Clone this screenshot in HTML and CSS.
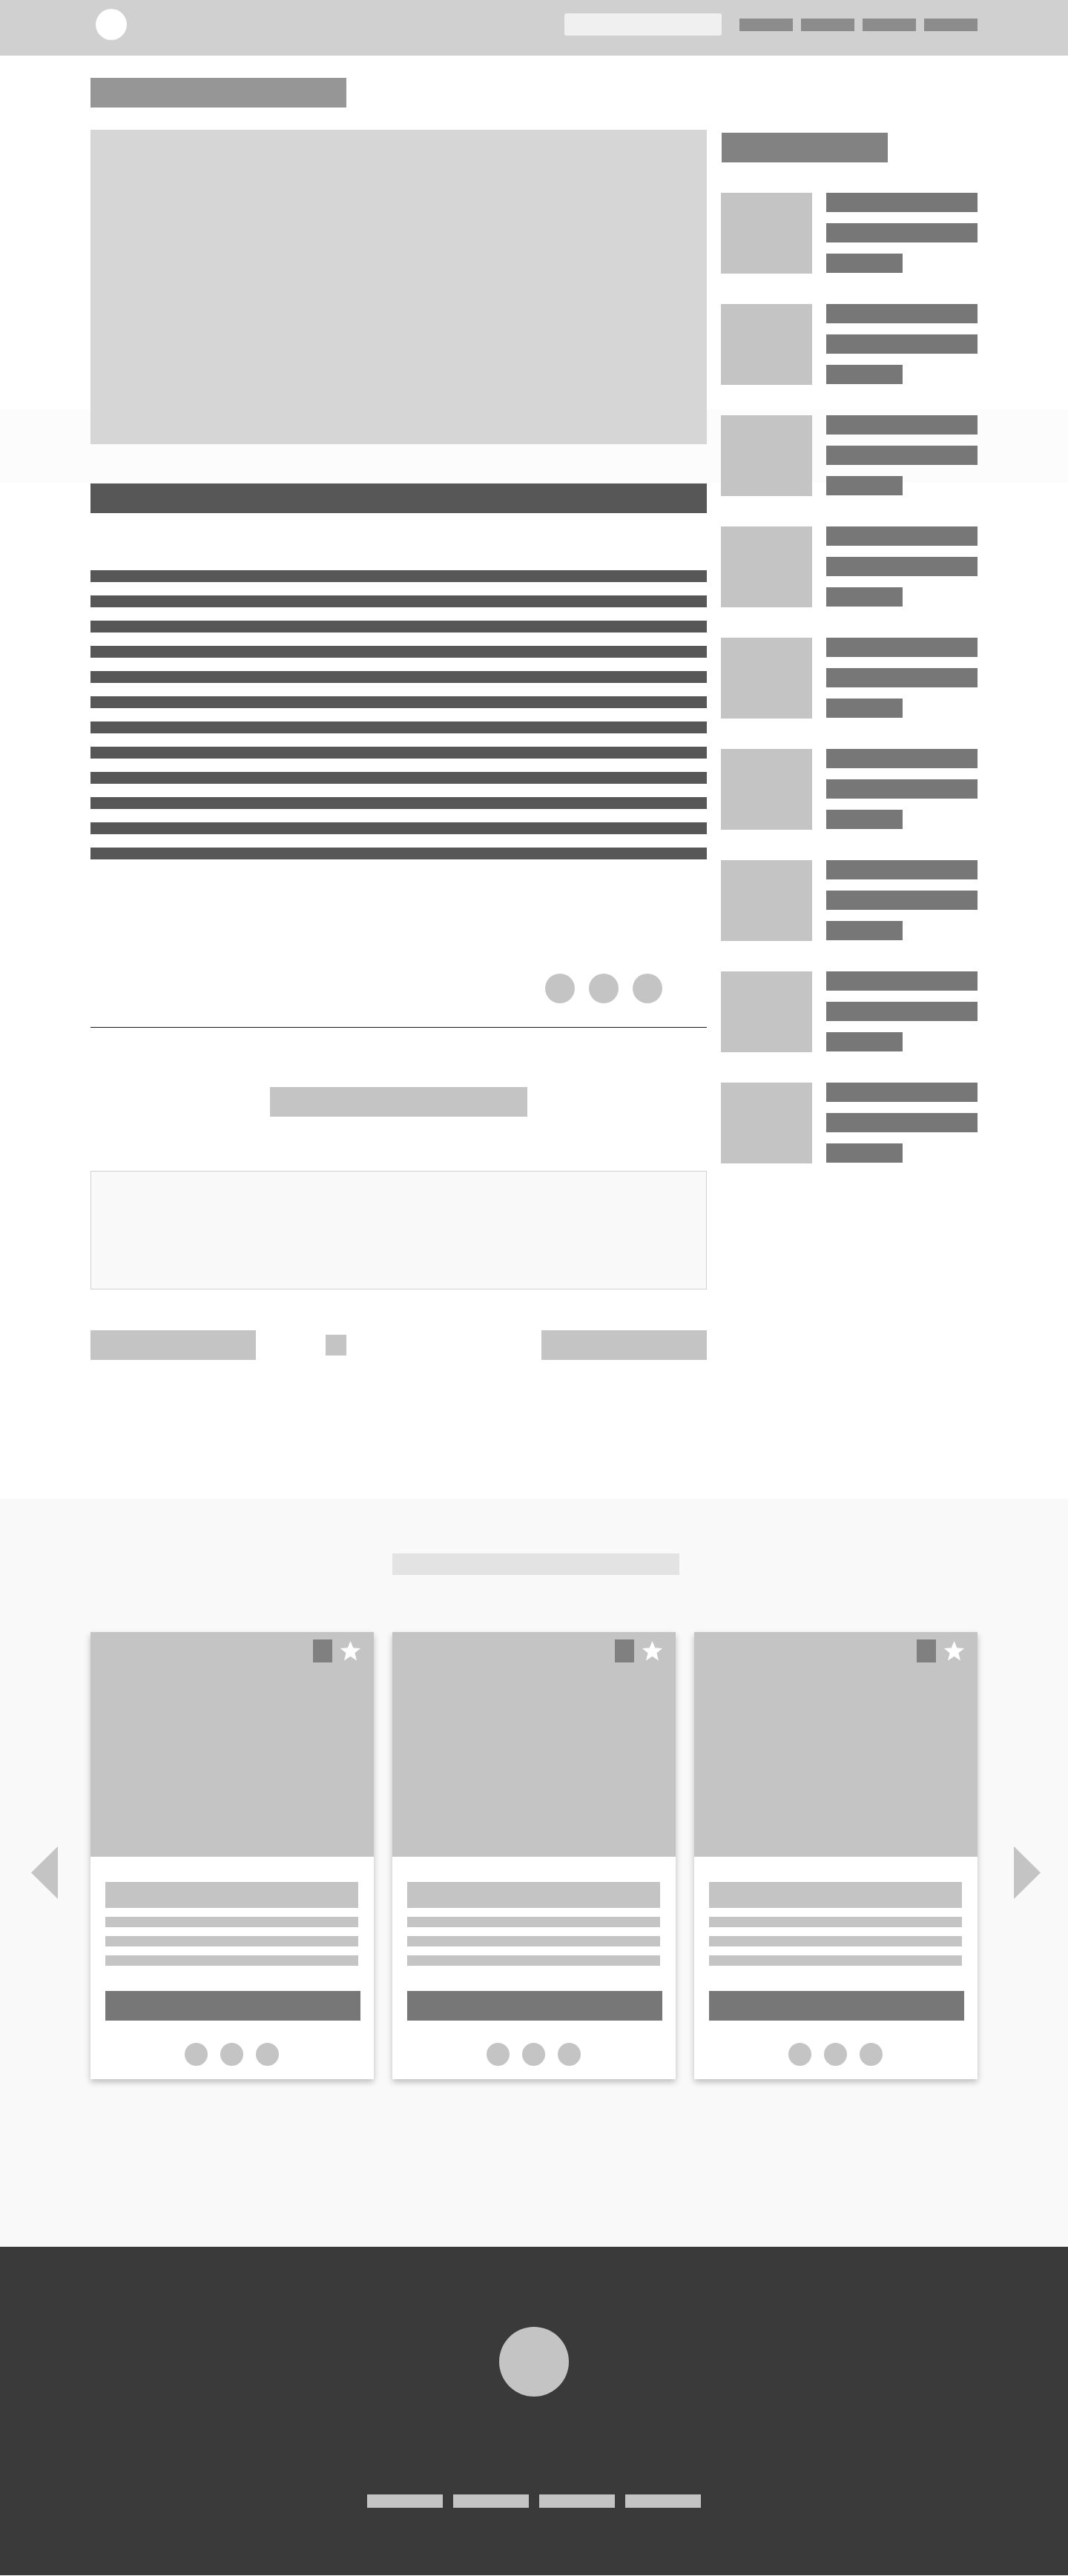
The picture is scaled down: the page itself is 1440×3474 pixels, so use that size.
FILE: index.html
```html
<!DOCTYPE html>
<html lang="en">
<head>
  <meta charset="UTF-8">
  <meta name="viewport" content="width=device-width, initial-scale=1.0">
  <title>Article Wireframe</title>
  <link rel="stylesheet" href="styles.css">
</head>
<body>
  <header class="site-header">
    <div class="container header-row">
      <div class="logo"></div>
      <div class="search"></div>
      <nav class="nav">
        <a class="nav-item" href="#"></a>
        <a class="nav-item" href="#"></a>
        <a class="nav-item" href="#"></a>
        <a class="nav-item" href="#"></a>
      </nav>
    </div>
  </header>

  <main class="page-main">
    <div class="container">
      <div class="page-title"></div>
      <div class="layout">
        <article class="article">
          <div class="hero"></div>
          <div class="heading"></div>
          <div class="text-lines">
            <div class="line"></div>
            <div class="line"></div>
            <div class="line"></div>
            <div class="line"></div>
            <div class="line"></div>
            <div class="line"></div>
            <div class="line"></div>
            <div class="line"></div>
            <div class="line"></div>
            <div class="line"></div>
            <div class="line"></div>
            <div class="line"></div>
          </div>
          <div class="share">
            <span class="share-dot"></span>
            <span class="share-dot"></span>
            <span class="share-dot"></span>
          </div>
          <hr class="divider">
          <div class="cta"></div>
          <div class="comment-box"></div>
          <div class="pager">
            <a class="pager-btn" href="#"></a>
            <span class="pager-mark"></span>
            <a class="pager-btn pager-next" href="#"></a>
          </div>
        </article>

        <aside class="sidebar">
          <div class="side-title"></div>
          <!-- 9 teaser rows -->
          <div class="side-item"><div class="thumb"></div><div class="side-lines"><span></span><span></span><span class="short"></span></div></div>
          <div class="side-item"><div class="thumb"></div><div class="side-lines"><span></span><span></span><span class="short"></span></div></div>
          <div class="side-item"><div class="thumb"></div><div class="side-lines"><span></span><span></span><span class="short"></span></div></div>
          <div class="side-item"><div class="thumb"></div><div class="side-lines"><span></span><span></span><span class="short"></span></div></div>
          <div class="side-item"><div class="thumb"></div><div class="side-lines"><span></span><span></span><span class="short"></span></div></div>
          <div class="side-item"><div class="thumb"></div><div class="side-lines"><span></span><span></span><span class="short"></span></div></div>
          <div class="side-item"><div class="thumb"></div><div class="side-lines"><span></span><span></span><span class="short"></span></div></div>
          <div class="side-item"><div class="thumb"></div><div class="side-lines"><span></span><span></span><span class="short"></span></div></div>
          <div class="side-item"><div class="thumb"></div><div class="side-lines"><span></span><span></span><span class="short"></span></div></div>
        </aside>
      </div>
    </div>
  </main>

  <section class="related">
    <div class="related-title"></div>
    <div class="carousel">
      <button class="arrow arrow-left" aria-label="Previous">
        <svg width="36" height="71" viewBox="0 0 36 71"><polygon points="36,0 36,71 0,35.5" fill="#c4c4c4"/></svg>
      </button>
      <div class="cards">
        <div class="card">
          <div class="card-img">
            <span class="badge"></span>
            <svg class="star" width="31" height="31" viewBox="0 0 24 24"><polygon points="12,1.5 14.9,8.8 22.5,9.2 16.6,14.1 18.6,22 12,17.6 5.4,22 7.4,14.1 1.5,9.2 9.1,8.8" fill="#fff"/></svg>
          </div>
          <div class="card-body">
            <div class="card-title"></div>
            <div class="card-line"></div>
            <div class="card-line"></div>
            <div class="card-line"></div>
            <a class="card-btn" href="#"></a>
            <div class="card-dots"><span></span><span></span><span></span></div>
          </div>
        </div>
        <div class="card">
          <div class="card-img">
            <span class="badge"></span>
            <svg class="star" width="31" height="31" viewBox="0 0 24 24"><polygon points="12,1.5 14.9,8.8 22.5,9.2 16.6,14.1 18.6,22 12,17.6 5.4,22 7.4,14.1 1.5,9.2 9.1,8.8" fill="#fff"/></svg>
          </div>
          <div class="card-body">
            <div class="card-title"></div>
            <div class="card-line"></div>
            <div class="card-line"></div>
            <div class="card-line"></div>
            <a class="card-btn" href="#"></a>
            <div class="card-dots"><span></span><span></span><span></span></div>
          </div>
        </div>
        <div class="card">
          <div class="card-img">
            <span class="badge"></span>
            <svg class="star" width="31" height="31" viewBox="0 0 24 24"><polygon points="12,1.5 14.9,8.8 22.5,9.2 16.6,14.1 18.6,22 12,17.6 5.4,22 7.4,14.1 1.5,9.2 9.1,8.8" fill="#fff"/></svg>
          </div>
          <div class="card-body">
            <div class="card-title"></div>
            <div class="card-line"></div>
            <div class="card-line"></div>
            <div class="card-line"></div>
            <a class="card-btn" href="#"></a>
            <div class="card-dots"><span></span><span></span><span></span></div>
          </div>
        </div>
      </div>
      <button class="arrow arrow-right" aria-label="Next">
        <svg width="36" height="71" viewBox="0 0 36 71"><polygon points="0,0 0,71 36,35.5" fill="#c4c4c4"/></svg>
      </button>
    </div>
  </section>

  <footer class="site-footer">
    <div class="footer-logo"></div>
    <div class="footer-links">
      <a href="#"></a>
      <a href="#"></a>
      <a href="#"></a>
      <a href="#"></a>
    </div>
  </footer>
</body>
</html>
```

FILE: styles.css
```css
body {
    margin: 0;
    font-family: 'Liberation Sans', Arial, sans-serif;
    background: #fff;
}
.container {
    width: 1196px;
    margin: 0 auto;
}

/* header */
.site-header {
    height: 75px;
    background: #d0d0d0;
    padding-top: 12px;
    box-sizing: border-box;
}
.header-row {
    display: flex;
    align-items: center;
    height: 42px;
}
.logo {
    width: 42px;
    height: 42px;
    margin-left: 7px;
    border-radius: 50%;
    background: #fff;
}
.search {
    width: 212px;
    height: 30px;
    margin-left: auto;
    background: #f0f0f0;
    border-radius: 3px;
}
.nav {
    display: flex;
    gap: 11px;
    margin-left: 24px;
}
.nav-item {
    display: block;
    width: 72px;
    height: 17px;
    background: #8c8c8c;
}

/* main article area */
.page-main {
    padding-top: 30px;
    padding-bottom: 187px;
    background: linear-gradient(to bottom, #fff 477px, #fcfcfc 477px, #fcfcfc 576px, #fff 576px);
}
.page-title {
    width: 345px;
    height: 40px;
    background: #969696;
}
.layout {
    display: flex;
    gap: 19px;
    margin-top: 30px;
}
.article {
    width: 831px;
    flex-shrink: 0;
}
.hero {
    height: 424px;
    background: #d6d6d6;
}
.heading {
    height: 40px;
    margin-top: 53px;
    background: #575757;
}
.text-lines {
    display: flex;
    flex-direction: column;
    gap: 18px;
    margin-top: 77px;
}
.line {
    height: 16px;
    background: #575757;
}
.share {
    display: flex;
    justify-content: flex-end;
    gap: 19px;
    padding-right: 60px;
    margin-top: 154px;
}
.share-dot {
    width: 40px;
    height: 40px;
    border-radius: 50%;
    background: #c4c4c4;
}
.divider {
    margin: 32px 0 0;
    border: none;
    height: 1px;
    background: #1a1a1a;
}
.cta {
    width: 347px;
    height: 40px;
    margin: 80px auto 0;
    background: #c4c4c4;
}
.comment-box {
    height: 160px;
    margin-top: 73px;
    box-sizing: border-box;
    border: 1px solid #d2d2d2;
    background: #f9f9f9;
}
.pager {
    display: flex;
    align-items: center;
    margin-top: 55px;
}
.pager-btn {
    display: block;
    width: 223px;
    height: 40px;
    background: #c4c4c4;
}
.pager-mark {
    width: 28px;
    height: 28px;
    margin-left: 94px;
    background: #c4c4c4;
}
.pager-next {
    margin-left: auto;
}

/* sidebar */
.sidebar {
    width: 346px;
    padding-top: 4px;
}
.side-title {
    width: 224px;
    height: 40px;
    margin-left: 1px;
    margin-bottom: 41px;
    background: #828282;
}
.side-item {
    display: flex;
    gap: 19px;
    margin-bottom: 41px;
}
.thumb {
    width: 123px;
    height: 109px;
    flex-shrink: 0;
    background: #c4c4c4;
}
.side-lines {
    display: flex;
    flex-direction: column;
    gap: 15px;
}
.side-lines span {
    display: block;
    width: 204px;
    height: 26px;
    background: #777;
}
.side-lines .short {
    width: 103px;
}

/* related carousel */
.related {
    background: #f9f9f9;
    padding-top: 74px;
    padding-bottom: 226px;
}
.related-title {
    width: 387px;
    height: 29px;
    margin: 0 auto;
    position: relative;
    left: 2px;
    background: #e3e3e3;
}
.carousel {
    display: flex;
    align-items: flex-start;
    margin-top: 77px;
}
.arrow {
    border: none;
    background: none;
    padding: 0;
    width: 36px;
    height: 71px;
    margin-top: 289px;
    cursor: pointer;
}
.arrow svg {
    display: block;
}
.arrow-left {
    margin-left: 42px;
}
.arrow-right {
    margin-left: 49px;
}
.cards {
    display: flex;
    gap: 25px;
    margin-left: 44px;
}
.card {
    width: 382px;
    background: #fff;
    box-shadow: 0 4px 8px rgba(0, 0, 0, 0.24);
}
.card-img {
    height: 303px;
    background: #c4c4c4;
    display: flex;
    justify-content: flex-end;
    align-items: flex-start;
    gap: 9px;
    padding: 10px 16px 0 0;
    box-sizing: border-box;
}
.badge {
    width: 26px;
    height: 31px;
    background: #808080;
}
.star {
    display: block;
}
.card-body {
    padding: 34px 21px 18px 20px;
}
.card-title {
    height: 35px;
    background: #c4c4c4;
}
.card-line {
    height: 14px;
    margin-top: 12px;
    background: #c4c4c4;
}
.card-btn {
    display: block;
    width: 344px;
    height: 40px;
    margin-top: 34px;
    background: #777;
}
.card-dots {
    display: flex;
    justify-content: center;
    gap: 17px;
    margin-top: 30px;
}
.card-dots span {
    width: 31px;
    height: 31px;
    border-radius: 50%;
    background: #c4c4c4;
}

/* footer */
.site-footer {
    height: 443px;
    background: #3a3a3a;
    padding-top: 108px;
    box-sizing: border-box;
}
.footer-logo {
    width: 94px;
    height: 94px;
    margin: 0 auto;
    border-radius: 50%;
    background: #c4c4c4;
}
.footer-links {
    display: flex;
    justify-content: center;
    gap: 14px;
    margin-top: 132px;
}
.footer-links a {
    display: block;
    width: 102px;
    height: 18px;
    background: #c4c4c4;
}
```
